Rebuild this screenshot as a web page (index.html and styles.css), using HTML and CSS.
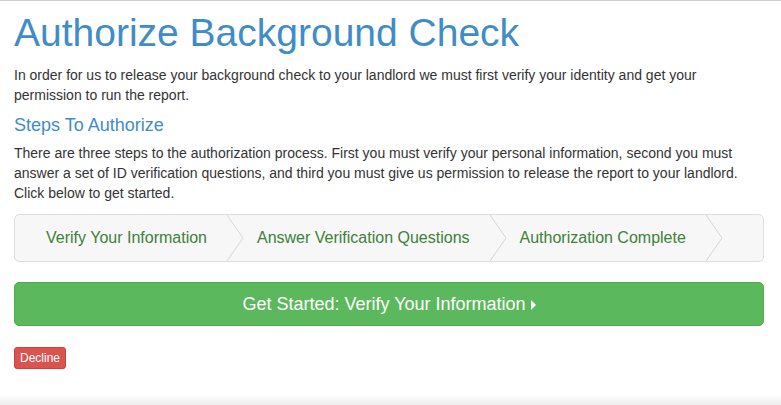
FILE: index.html
```html
<!DOCTYPE html>
<html lang="en">
<head>
    <meta charset="UTF-8">
    <meta name="viewport" content="width=device-width, initial-scale=1.0">
    <title>Authorize Background Check</title>
    <link rel="stylesheet" href="styles.css">
</head>
<body>
    <div class="container">
        <h1 class="title">Authorize Background Check</h1>
        <p>In order for us to release your background check to your landlord we must first verify your identity and get your permission to run the report.</p>
        <h3 class="subtitle">Steps To Authorize</h3>
        <p>There are three steps to the authorization process. First you must verify your personal information, second you must answer a set of ID verification questions, and third you must give us permission to release the report to your landlord. Click below to get started.</p>

        <div class="steps">
            <div class="step first">Verify Your Information</div>
            <svg class="chev" width="16" height="46" viewBox="0 0 16 46"><polyline points="0,0 16,23 0,46" fill="none" stroke="#d6d6d6" stroke-width="1"/></svg>
            <div class="step">Answer Verification Questions</div>
            <svg class="chev" width="16" height="46" viewBox="0 0 16 46"><polyline points="0,0 16,23 0,46" fill="none" stroke="#d6d6d6" stroke-width="1"/></svg>
            <div class="step">Authorization Complete</div>
            <svg class="chev" width="16" height="46" viewBox="0 0 16 46"><polyline points="0,0 16,23 0,46" fill="none" stroke="#d6d6d6" stroke-width="1"/></svg>
        </div>

        <button class="btn btn-start">Get Started: Verify Your Information <span class="caret"></span></button>

        <button class="btn btn-decline">Decline</button>
    </div>
</body>
</html>
```

FILE: styles.css
```css
*{
    box-sizing: border-box;
}
html, body{
    margin: 0;
    padding: 0;
}
body{
    font-family: "Liberation Sans", Arial, sans-serif;
    font-size: 14px;
    line-height: 20px;
    color: #333;
    border-top: 1px solid #cfcfcf;
    min-height: 100vh;
    background: linear-gradient(to bottom, #fff calc(100% - 10px), #ececec 100%);
}
.container{
    padding: 0 17px 0 14px;
}
.title{
    margin: 10px 0 10px;
    font-size: 39px;
    line-height: 44px;
    font-weight: normal;
    color: #3f8cc8;
}
p{
    margin: 0;
}
.subtitle{
    margin: 10px 0 8px;
    font-size: 18px;
    line-height: 20px;
    font-weight: normal;
    color: #3f8cc8;
}
.steps{
    display: flex;
    align-items: center;
    margin-top: 11px;
    height: 48px;
    background: #f7f7f7;
    border: 1px solid #ddd;
    border-radius: 5px;
}
.step{
    padding: 0 20px 0 14px;
    font-size: 16px;
    color: #40803a;
}
.step.first{
    padding-left: 31px;
}
.chev{
    display: block;
    flex: none;
}
.btn{
    display: block;
    font-family: "Liberation Sans", Arial, sans-serif;
    color: #fff;
    cursor: pointer;
}
.btn-start{
    width: 100%;
    height: 44px;
    margin-top: 20px;
    font-size: 18px;
    background: #5cb85c;
    border: 1px solid #4cae4c;
    border-radius: 5px;
}
.caret{
    display: inline-block;
    width: 0;
    height: 0;
    border-left: 5px solid #fff;
    border-top: 5px solid transparent;
    border-bottom: 5px solid transparent;
    vertical-align: 0;
}
.btn-decline{
    margin-top: 21px;
    height: 22px;
    padding: 0 5px;
    font-size: 12px;
    line-height: 18px;
    background: #d9534f;
    border: 1px solid #d43f3a;
    border-radius: 3px;
}
```
